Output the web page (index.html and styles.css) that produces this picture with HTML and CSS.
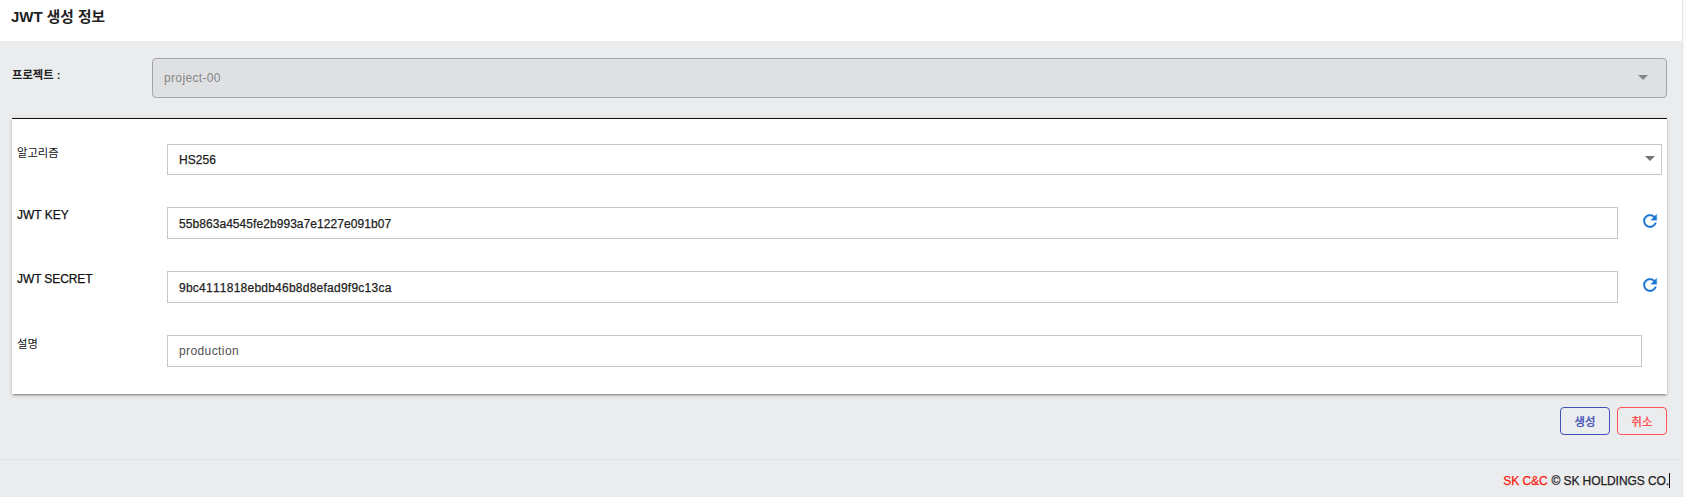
FILE: index.html
```html
<!DOCTYPE html>
<html lang="ko">
<head>
<meta charset="utf-8">
<title>JWT 생성 정보</title>
<link rel="stylesheet" href="styles.css">
</head>
<body>
<div class="page">
  <header class="header"><h1 class="title">JWT <span class="title-ko">생성 정보</span></h1></header>
  <main class="main">
    <div class="project">
      <span class="project-label">프로젝트 :</span>
      <div class="project-select"><span>project-00</span><i class="arrow"></i></div>
    </div>
    <section class="card">
      <div class="row">
        <span class="label ko">알고리즘</span>
        <div class="field select medium"><span>HS256</span><i class="arrow"></i></div>
      </div>
      <div class="row">
        <span class="label medium">JWT KEY</span>
        <div class="field medium">55b863a4545fe2b993a7e1227e091b07</div>
        <svg class="refresh" viewBox="0 0 24 24"><path d="M17.65 6.35C16.2 4.9 14.21 4 12 4c-4.42 0-7.99 3.58-7.99 8s3.57 8 7.99 8c3.73 0 6.84-2.55 7.73-6h-2.08c-.82 2.33-3.04 4-5.65 4-3.31 0-6-2.69-6-6s2.69-6 6-6c1.66 0 3.14.69 4.22 1.78L13 11h7V4l-2.35 2.35z"/></svg>
      </div>
      <div class="row">
        <span class="label medium secret">JWT SECRET</span>
        <div class="field medium secret-value">9bc4111818ebdb46b8d8efad9f9c13ca</div>
        <svg class="refresh" viewBox="0 0 24 24"><path d="M17.65 6.35C16.2 4.9 14.21 4 12 4c-4.42 0-7.99 3.58-7.99 8s3.57 8 7.99 8c3.73 0 6.84-2.55 7.73-6h-2.08c-.82 2.33-3.04 4-5.65 4-3.31 0-6-2.69-6-6s2.69-6 6-6c1.66 0 3.14.69 4.22 1.78L13 11h7V4l-2.35 2.35z"/></svg>
      </div>
      <div class="row">
        <span class="label ko">설명</span>
        <div class="field description">production</div>
      </div>
    </section>
    <div class="actions">
      <button class="button create">생성</button>
      <button class="button cancel">취소</button>
    </div>
  </main>
  <footer class="footer medium"><span class="brand">SK C&amp;C</span><span class="company">© SK HOLDINGS CO.</span><i class="caret"></i></footer>
</div>
</body>
</html>
```
FILE: styles.css
```css
* { box-sizing: border-box; }
body {
  margin: 0;
  background: #fafafa;
  color: #212121;
  font: 12px/16px "Liberation Sans", "Noto Sans CJK KR", sans-serif;
  overflow: hidden;
}
.page {
  width: 1683px;
  height: 497px;
  display: flex;
  flex-direction: column;
  background: #ebecee;
  border-right: 1px solid #e6e7e8;
}
.header { height: 41px; background: #fff; padding: 7px 11px 6px; }
.title { margin: 0; font-size: 15px; line-height: 20px; font-weight: 700; }
.title-ko { font-size: 14.7px; }
.main { height: 418px; padding: 17px 15px 0 12px; }
.project { display: flex; height: 60px; }
.project-label { width: 140px; padding-top: 9px; font-size: 11.3px; font-weight: 700; }
.project-select {
  flex: 1;
  height: 40px;
  display: flex;
  align-items: center;
  justify-content: space-between;
  padding: 0 18px 0 11px;
  border: 1px solid #a3a4a6;
  border-radius: 4px;
  background: #dfe0e2;
  color: #858687;
  letter-spacing: .35px;
}
.project-select .arrow { margin-bottom: 2px; border-top-color: #858687; }
.arrow {
  width: 0;
  height: 0;
  border: 5px solid transparent;
  border-top-color: #757575;
  border-bottom: 0;
}
.card {
  height: 276px;
  padding: 25px 5px 0;
  border-top: 1px solid #111;
  background: #fff;
  box-shadow: 0 3px 1px -2px rgba(0,0,0,.2), 0 2px 2px 0 rgba(0,0,0,.14), 0 1px 5px 0 rgba(0,0,0,.12);
}
.row { display: flex; height: 64px; }
.row:first-child { height: 63px; }
.label { width: 150px; color: #111; }
.ko { font-size: 11.3px; padding-top: 1px; }
.secret { letter-spacing: -.1px; }
.field {
  height: 32px;
  width: 1451px;
  padding: 2px 11px 0;
  border: 1px solid #c6c6c6;
  line-height: 28px;
  letter-spacing: .06px;
  font-kerning: none;
}
.secret-value { letter-spacing: .24px; }
.select {
  width: 1495px;
  height: 31px;
  padding: 0 6px 0 11px;
  display: flex;
  align-items: center;
  justify-content: space-between;
}
.select .arrow { margin-bottom: 2px; }
.description { width: 1475px; color: #505050; padding-top: 1px; letter-spacing: .4px; }
.medium { -webkit-text-stroke: .25px currentColor; }
.refresh { width: 20px; height: 20px; margin: 4px 0 0 22px; fill: #1976d2; stroke: #1976d2; stroke-width: .4; }
.actions { display: flex; justify-content: flex-end; gap: 7px; padding-top: 13px; }
.button {
  width: 50px;
  height: 28px;
  padding: 0;
  border: 1px solid;
  border-radius: 4px;
  background: transparent;
  font: 500 11.3px/24px "Noto Sans CJK KR", sans-serif;
  -webkit-text-stroke: .2px currentColor;
}
.create { color: #3f51b5; }
.cancel { color: #ff5252; }
.footer {
  height: 38px;
  display: flex;
  justify-content: flex-end;
  padding: 13px 12px 0 0;
  border-top: 1px solid #e2e3e5;
  letter-spacing: -.08px;
}
.brand { color: #f91c0c; margin-right: 4px; }
.caret { width: 1px; height: 15px; background: #111; }
```
